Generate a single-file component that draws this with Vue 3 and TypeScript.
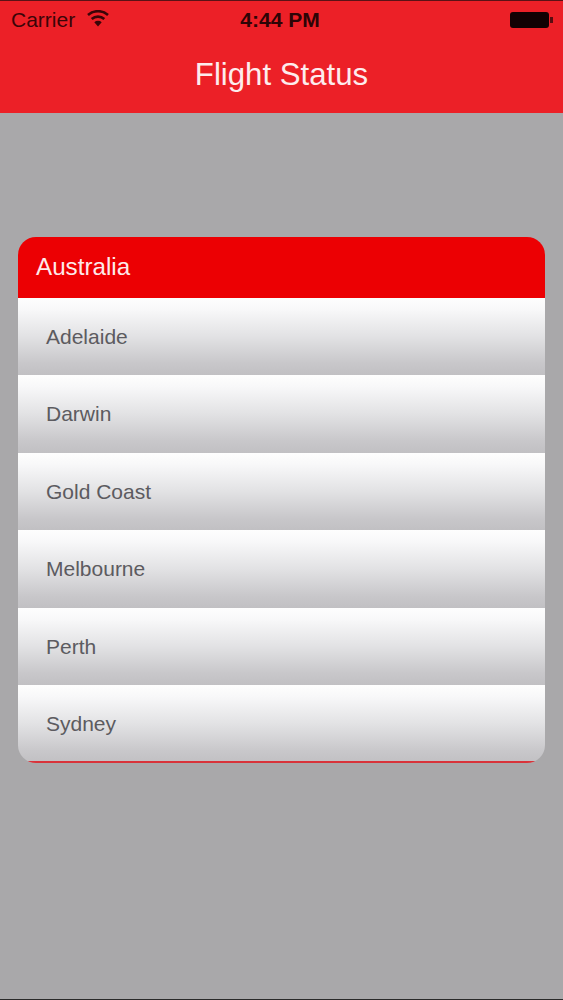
<script setup lang="ts">
const cities: string[] = ['Adelaide', 'Darwin', 'Gold Coast', 'Melbourne', 'Perth', 'Sydney']
</script>

<template>
  <div class="page">
    <header class="bar">
      <div class="status">
        <div class="status-left">
          <span>Carrier</span>
          <svg class="wifi" width="22" height="17" viewBox="0 0 22 17" aria-hidden="true">
            <path d="M11 16.5 7.3 12.2a5.4 5.4 0 0 1 7.4 0Z" fill="#3a0508" />
            <path d="M4.7 9a9.4 9.4 0 0 1 12.6 0" fill="none" stroke="#3a0508" stroke-width="2.6" />
            <path d="M1 5a15 15 0 0 1 20 0" fill="none" stroke="#3a0508" stroke-width="2.6" />
          </svg>
        </div>
        <div class="time">4:44 PM</div>
        <div class="status-right">
          <div class="battery"></div>
          <div class="nub"></div>
        </div>
      </div>
      <h1 class="title">Flight Status</h1>
    </header>
    <main class="content">
      <section class="card">
        <h2 class="card-head">Australia</h2>
        <ul class="list">
          <li v-for="city in cities" :key="city" class="row">{{ city }}</li>
        </ul>
      </section>
    </main>
  </div>
</template>

<style>
html, body { margin: 0; padding: 0; background: #a9a8aa; }
</style>

<style scoped>
.page {
  width: 563px;
  height: 1000px;
  box-sizing: border-box;
  display: flex;
  flex-direction: column;
  overflow: hidden;
  background: #a9a8aa;
  border-bottom: 1px solid #2a2a2a;
  font-family: "Liberation Sans", Arial, sans-serif;
}
.bar {
  height: 113px;
  box-sizing: border-box;
  flex: none;
  background: #ec2027;
  border-top: 1px solid #5a1216;
  display: flex;
  flex-direction: column;
}
.status {
  height: 37px;
  padding: 0 10px 0 11px;
  display: grid;
  grid-template-columns: 1fr auto 1fr;
  align-items: center;
  color: #3a0508;
  font-size: 21px;
}
.status-left { display: flex; align-items: center; gap: 12px; }
.wifi { margin-top: -3px; }
.time { font-weight: 700; font-size: 21px; color: #2e0406; margin-right: 4px; }
.status-right { display: flex; justify-content: flex-end; align-items: center; gap: 1px; }
.battery { width: 39px; height: 16px; border-radius: 3px; background: #120103; }
.nub { width: 3px; height: 6px; background: #5a0c10; }
.title {
  margin: 0;
  padding-top: 16px;
  text-align: center;
  color: #fdeced;
  font-size: 31.2px;
  line-height: 42px;
  font-weight: 400;
}
.content { padding: 123.5px 18px 0; }
.card {
  position: relative;
  height: 526px;
  box-sizing: border-box;
  border-radius: 18px;
  overflow: hidden;
  display: flex;
  flex-direction: column;
}
.card::after {
  content: "";
  position: absolute;
  left: 10px;
  right: 10px;
  bottom: 0;
  height: 2px;
  background: #d9333a;
}
.card-head {
  margin: 0;
  height: 61px;
  flex: none;
  padding-left: 18px;
  display: flex;
  align-items: center;
  background: #ec0003;
  color: #fdeaea;
  font-size: 24.2px;
  font-weight: 400;
}
.list {
  margin: 0;
  padding: 0;
  list-style: none;
  flex: 1;
  display: grid;
  grid-template-rows: repeat(6, 1fr);
}
.row {
  padding: 1px 0 0 28px;
  display: flex;
  align-items: center;
  color: #5c5b60;
  font-size: 21px;
  background: linear-gradient(#fefefe 0%, #f8f8f9 15%, #e2e2e4 50%, #c8c7ca 85%, #c1c0c3 100%);
}
</style>
